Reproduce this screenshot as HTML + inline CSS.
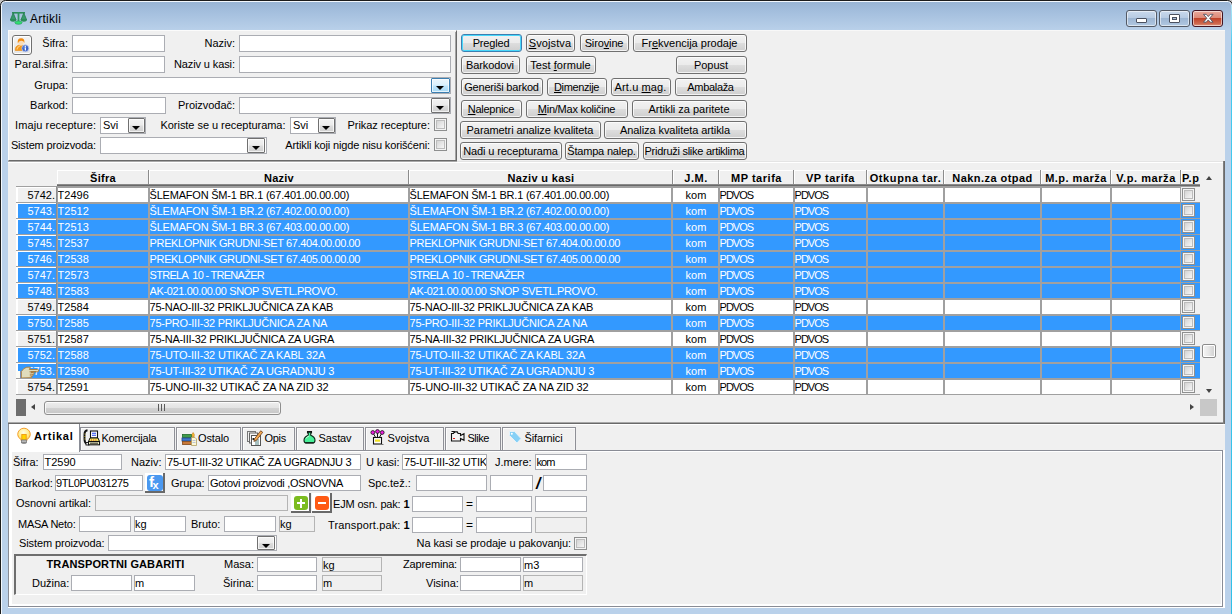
<!DOCTYPE html><html><head><meta charset="utf-8"><title>Artikli</title><style>
*{box-sizing:border-box;margin:0;padding:0}
html,body{width:1232px;height:614px;overflow:hidden;background:#c3c3c3}
body{font-family:"Liberation Sans",sans-serif;font-size:11px;color:#000;position:relative;line-height:13px}
.a{position:absolute}
.t{position:absolute;white-space:pre;height:13px;line-height:13px}
.r{text-align:right}
.c{text-align:center}
.b{font-weight:bold}
.in{position:absolute;background:#fff;border:1px solid #abadb3;white-space:pre;overflow:hidden;line-height:15px;padding-left:1px}
.dis{background:#f0f0f0;border-color:#b4b4b4}
.btn{position:absolute;border:1px solid #707070;border-radius:3px;background:linear-gradient(#f2f2f2 0%,#ebebeb 48%,#dddddd 52%,#cfcfcf 100%);box-shadow:inset 0 0 0 1px rgba(255,255,255,.75);text-align:center;white-space:pre;line-height:16px;height:18px;padding-right:1px}
.btn.def{border-color:#3c7fb1;box-shadow:inset 0 0 0 1px #48d8fb}
.cb{position:absolute;width:13px;height:13px;border:1px solid #8e8f8f;background:#f4f4f4;box-shadow:inset 0 0 0 1px #f4f4f4, inset 0 0 0 2px #bcbcbc;}
.cb i{position:absolute;left:2px;top:2px;width:7px;height:7px;background:linear-gradient(135deg,#d4d4d4,#f6f6f6)}
.dd{position:absolute;width:17px;border:1px solid #707070;border-radius:1px;background:linear-gradient(#f2f2f2 0%,#ebebeb 48%,#dddddd 52%,#cfcfcf 100%);box-shadow:inset 0 0 0 1px rgba(255,255,255,.7)}
.dd:after{content:"";position:absolute;left:50%;margin-left:-4.5px;top:7px;border:4px solid transparent;border-top:4px solid #000;border-bottom:none;width:0;height:0}
.dd.hot{border-color:#3c7fb1;background:linear-gradient(#eaf6fd 0%,#d9f0fc 48%,#bee6fd 52%,#a7d9f5 100%)}
u{text-decoration:underline}
</style></head><body>
<div class="a" style="left:0px;top:0px;width:1233px;height:620px;background:linear-gradient(#98b4d4 0px,#a3bedd 10px,#bad1ea 30px,#bad1ea 100%);border:1px solid #1c1c1c;border-radius:5.5px 5.5px 0 0;box-shadow:inset 0 0 0 1px #f3f8fd;"></div>
<div class="a" style="left:1231px;top:5px;width:1px;height:609px;background:linear-gradient(#b4e6f6 0px,#46caf0 40px,#30c0e8 100%)"></div>
<svg class="a" style="left:10px;top:11px" width="17" height="14" viewBox="0 0 17 14">
<rect x="2" y="1" width="13" height="1.6" fill="#2c8c5a"/>
<rect x="7.6" y="1" width="1.8" height="10" fill="#2f9762"/>
<path d="M0.3 9 L3.2 2 L6.1 9 Z" fill="#379a6c" stroke="#237a4e" stroke-width=".8"/>
<path d="M10.9 9 L13.8 2 L16.7 9 Z" fill="#379a6c" stroke="#237a4e" stroke-width=".8"/>
<path d="M0.2 8.6 h6 a3 2.2 0 0 1 -6 0z" fill="#2a8c58"/>
<path d="M10.8 8.6 h6 a3 2.2 0 0 1 -6 0z" fill="#2a8c58"/>
<ellipse cx="8.5" cy="11.6" rx="3.6" ry="1.7" fill="#2fe070" stroke="#2a9c5c" stroke-width=".7"/>
</svg>
<div class="t " style="left:30px;top:12px;font-size:12px;height:15px;line-height:15px;letter-spacing:.25px">Artikli</div>
<div class="a" style="left:1126px;top:10px;width:31px;height:17px;background:linear-gradient(#c9d9ec 0%,#b7cbe3 45%,#9db6d3 50%,#b0c8e2 100%);border:1px solid #535a66;border-radius:3px;box-shadow:inset 0 0 0 1px rgba(255,255,255,.55)"></div>
<div class="a" style="left:1159px;top:10px;width:31px;height:17px;background:linear-gradient(#c9d9ec 0%,#b7cbe3 45%,#9db6d3 50%,#b0c8e2 100%);border:1px solid #535a66;border-radius:3px;box-shadow:inset 0 0 0 1px rgba(255,255,255,.55)"></div>
<div class="a" style="left:1192px;top:10px;width:31px;height:17px;background:linear-gradient(#e9a99c 0%,#dd8a78 45%,#c0432a 50%,#cf6a50 85%,#e39a85 100%);border:1px solid #431422;border-radius:3px;box-shadow:inset 0 0 0 1px rgba(255,255,255,.55)"></div>
<div class="a" style="left:1136px;top:18px;width:11px;height:5px;background:#fff;border:1px solid #4a5160;border-radius:1px"></div>
<div class="a" style="left:1169px;top:14px;width:11px;height:9px;background:#fff;border:1px solid #4a5160;border-radius:1px"></div>
<div class="a" style="left:1172px;top:17px;width:5px;height:3px;background:#a9bfd9;border:1px solid #4a5160"></div>
<svg class="a" style="left:1201.500px;top:13px" width="12.500" height="10.500" viewBox="0 0 14 12"><path d="M1.5 1.5h3.2l2.3 2.6 2.3-2.6h3.2l-3.9 4.5 3.9 4.5h-3.2l-2.3-2.6-2.3 2.6h-3.2l3.9-4.5z" fill="#fff" stroke="#4a4e5e" stroke-width="1"/></svg>
<div class="a" style="left:8px;top:30px;width:1217px;height:578px;background:#f0f0f0"></div>
<div class="a" style="left:8px;top:30px;width:449px;height:131px;border-right:1px solid #696969;border-bottom:1px solid #696969;border-top:1px solid #fbfbfb;border-left:1px solid #fbfbfb"></div>
<div class="a" style="left:455px;top:32px;width:1px;height:128px;background:#a4a4a4"></div>
<div class="a" style="left:457px;top:30px;width:768px;height:1px;background:#f8f8f8"></div>
<div class="a" style="left:457px;top:161px;width:766px;height:1px;background:#e4e4e4"></div>
<div class="a" style="left:8px;top:161px;width:449px;height:1px;background:#a8a8a8"></div>
<div class="a" style="left:8px;top:162px;width:1215px;height:1px;background:#fff"></div>
<div class="a" style="left:12px;top:35px;width:20px;height:20px;border:1px solid #707070;border-radius:3px;background:linear-gradient(#f4f4f4,#e4e4e4);box-shadow:inset 0 0 0 1px #fff"></div>
<svg class="a" style="left:14px;top:37px" width="16" height="16" viewBox="0 0 16 16">
<path d="M1.300 13.500 q-.5-4.500 4-5.500 h3 q3.500 1 3.500 5.500z" fill="#f5981c" stroke="#e88a10" stroke-width=".6"/>
<path d="M3 12.500 q.5-3 3-3.500" stroke="#fcc878" stroke-width="1.200" fill="none"/>
<ellipse cx="7" cy="5.800" rx="2.600" ry="2.900" fill="#f9dcb8"/>
<path d="M3.800 6.500 q-.8-5.300 3.300-5.300 q4 0 3.200 5 q-.6-2.600 -3.300-2.400 q-2.400 0 -3.200 2.700z" fill="#f28a10"/>
<circle cx="11.300" cy="11.300" r="3.500" fill="#3a62c8" stroke="#c8d4f0" stroke-width=".7"/>
<circle cx="10.500" cy="10.200" r="1.800" fill="#5a86e0" opacity=".7"/>
<rect x="10.750" y="10.400" width="1.200" height="3.100" fill="#fff"/><rect x="10.750" y="8.700" width="1.200" height="1.200" fill="#fff"/>
</svg>
<div class="t r " style="right:1164px;top:37px;">Šifra:</div>
<div class="in " style="left:72px;top:35px;width:93px;height:17px;"></div>
<div class="t r " style="right:997px;top:37px;">Naziv:</div>
<div class="in " style="left:239px;top:35px;width:212px;height:17px;"></div>
<div class="t r " style="right:1163.92px;top:58px;letter-spacing:0.077px;">Paral.šifra:</div>
<div class="in " style="left:72px;top:56px;width:93px;height:17px;"></div>
<div class="t r " style="right:997.105px;top:58px;letter-spacing:-0.105px;">Naziv u kasi:</div>
<div class="in " style="left:239px;top:56px;width:212px;height:17px;"></div>
<div class="t r " style="right:1164px;top:79px;">Grupa:</div>
<div class="in " style="left:72px;top:77px;width:379px;height:17px;"></div>
<div class="dd hot" style="left:431px;top:78px;height:15px;width:19px"></div>
<div class="t r " style="right:1164px;top:99px;">Barkod:</div>
<div class="in " style="left:72px;top:97px;width:94px;height:17px;"></div>
<div class="t r " style="right:997.044px;top:99px;letter-spacing:-0.044px;">Proizvođač:</div>
<div class="in " style="left:239px;top:97px;width:212px;height:17px;"></div>
<div class="dd " style="left:431px;top:98px;height:15px;width:19px"></div>
<div class="t r " style="right:1135.9px;top:119px;letter-spacing:0.095px;">Imaju recepture:</div>
<div class="in " style="left:100px;top:117px;width:46px;height:17px;padding-left:2px">Svi</div>
<div class="dd " style="left:128px;top:118px;height:15px;width:17px"></div>
<div class="t r " style="right:946.538px;top:119px;letter-spacing:-0.038px;">Koriste se u recepturama:</div>
<div class="in " style="left:290px;top:117px;width:46px;height:17px;padding-left:2px">Svi</div>
<div class="dd " style="left:318px;top:118px;height:15px;width:17px"></div>
<div class="t r " style="right:802.039px;top:119px;letter-spacing:-0.039px;">Prikaz recepture:</div>
<div class="cb" style="left:434px;top:118px"><i></i></div>
<div class="t r " style="right:1136.14px;top:139px;letter-spacing:-0.143px;">Sistem proizvoda:</div>
<div class="in " style="left:100px;top:137px;width:167px;height:17px;"></div>
<div class="dd " style="left:247px;top:138px;height:15px;width:18px"></div>
<div class="t r " style="right:802.137px;top:139px;letter-spacing:-0.137px;">Artikli koji nigde nisu korišćeni:</div>
<div class="cb" style="left:434px;top:138px"><i></i></div>
<div class="btn def" style="left:461px;top:34px;width:61px;letter-spacing:-0.175px;">Pregled</div>
<div class="btn " style="left:526px;top:34px;width:49px;letter-spacing:0.090px;"><u>S</u>vojstva</div>
<div class="btn " style="left:580px;top:34px;width:49px;letter-spacing:-0.131px;">Siro<u>v</u>ine</div>
<div class="btn " style="left:633px;top:34px;width:114px;letter-spacing:-0.005px;">Fr<u>e</u>kvencija prodaje</div>
<div class="btn " style="left:461px;top:56px;width:59px;letter-spacing:-0.125px;">Barkodovi</div>
<div class="btn " style="left:526px;top:56px;width:70px;letter-spacing:0.057px;">Test <u>f</u>ormule</div>
<div class="btn " style="left:676px;top:56px;width:71px;letter-spacing:-0.042px;">Popust</div>
<div class="btn " style="left:461px;top:78px;width:82px;letter-spacing:-0.210px;">Generiši barkod</div>
<div class="btn " style="left:547px;top:78px;width:60px;letter-spacing:-0.366px;"><u>D</u>imenzije</div>
<div class="btn " style="left:611px;top:78px;width:60px;letter-spacing:0.105px;">Art.u <u>m</u>ag.</div>
<div class="btn " style="left:675px;top:78px;width:72px;letter-spacing:-0.328px;">Ambalaža</div>
<div class="btn " style="left:461px;top:100px;width:61px;letter-spacing:-0.291px;"><u>N</u>alepnice</div>
<div class="btn " style="left:526px;top:100px;width:102px;letter-spacing:-0.238px;"><u>M</u>in/Max količine</div>
<div class="btn " style="left:632px;top:100px;width:115px;letter-spacing:-0.016px;">Artikli za paritete</div>
<div class="btn " style="left:460px;top:121px;width:141px;letter-spacing:-0.082px;">Parametri analize kvaliteta</div>
<div class="btn " style="left:604px;top:121px;width:143px;letter-spacing:-0.076px;">Analiza kvaliteta artikla</div>
<div class="btn " style="left:460px;top:142px;width:102px;letter-spacing:-0.112px;">Nađi u recepturama</div>
<div class="btn " style="left:565px;top:142px;width:74px;letter-spacing:-0.195px;">Štampa nalep.</div>
<div class="btn " style="left:643px;top:142px;width:104px;letter-spacing:-0.269px;">Pridruži slike artiklima</div>
<div class="a" style="left:57px;top:170px;width:91px;height:14px;background:#f0f0f0;border-left:1px solid #fff;border-top:1px solid #fff;overflow:hidden"><div class="t b c" style="left:0;right:0;top:0.5px;letter-spacing:0.306px;">Šifra</div></div>
<div class="a" style="left:148px;top:170px;width:1px;height:14px;background:#8c8c8c"></div>
<div class="a" style="left:149px;top:170px;width:259px;height:14px;background:#f0f0f0;border-left:1px solid #fff;border-top:1px solid #fff;overflow:hidden"><div class="t b c" style="left:0;right:0;top:0.5px;letter-spacing:0.250px;">Naziv</div></div>
<div class="a" style="left:408px;top:170px;width:1px;height:14px;background:#8c8c8c"></div>
<div class="a" style="left:409px;top:170px;width:263px;height:14px;background:#f0f0f0;border-left:1px solid #fff;border-top:1px solid #fff;overflow:hidden"><div class="t b c" style="left:0;right:0;top:0.5px;letter-spacing:0.335px;">Naziv u kasi</div></div>
<div class="a" style="left:672px;top:170px;width:1px;height:14px;background:#8c8c8c"></div>
<div class="a" style="left:673px;top:170px;width:45px;height:14px;background:#f0f0f0;border-left:1px solid #fff;border-top:1px solid #fff;overflow:hidden"><div class="t b c" style="left:0;right:0;top:0.5px;letter-spacing:0.523px;">J.M.</div></div>
<div class="a" style="left:718px;top:170px;width:1px;height:14px;background:#8c8c8c"></div>
<div class="a" style="left:719px;top:170px;width:74px;height:14px;background:#f0f0f0;border-left:1px solid #fff;border-top:1px solid #fff;overflow:hidden"><div class="t b c" style="left:0;right:0;top:0.5px;letter-spacing:0.526px;">MP tarifa</div></div>
<div class="a" style="left:793px;top:170px;width:1px;height:14px;background:#8c8c8c"></div>
<div class="a" style="left:794px;top:170px;width:72px;height:14px;background:#f0f0f0;border-left:1px solid #fff;border-top:1px solid #fff;overflow:hidden"><div class="t b c" style="left:0;right:0;top:0.5px;letter-spacing:0.507px;">VP tarifa</div></div>
<div class="a" style="left:866px;top:170px;width:1px;height:14px;background:#8c8c8c"></div>
<div class="a" style="left:867px;top:170px;width:76px;height:14px;background:#f0f0f0;border-left:1px solid #fff;border-top:1px solid #fff;overflow:hidden"><div class="t b c" style="left:0;right:0;top:0.5px;letter-spacing:0.630px;">Otkupna tar.</div></div>
<div class="a" style="left:943px;top:170px;width:1px;height:14px;background:#8c8c8c"></div>
<div class="a" style="left:944px;top:170px;width:96px;height:14px;background:#f0f0f0;border-left:1px solid #fff;border-top:1px solid #fff;overflow:hidden"><div class="t b c" style="left:0;right:0;top:0.5px;letter-spacing:0.456px;">Nakn.za otpad</div></div>
<div class="a" style="left:1040px;top:170px;width:1px;height:14px;background:#8c8c8c"></div>
<div class="a" style="left:1041px;top:170px;width:69px;height:14px;background:#f0f0f0;border-left:1px solid #fff;border-top:1px solid #fff;overflow:hidden"><div class="t b c" style="left:0;right:0;top:0.5px;letter-spacing:0.489px;">M.p. marža</div></div>
<div class="a" style="left:1110px;top:170px;width:1px;height:14px;background:#8c8c8c"></div>
<div class="a" style="left:1111px;top:170px;width:69px;height:14px;background:#f0f0f0;border-left:1px solid #fff;border-top:1px solid #fff;overflow:hidden"><div class="t b c" style="left:0;right:0;top:0.5px;letter-spacing:0.573px;">V.p. marža</div></div>
<div class="a" style="left:1180px;top:170px;width:1px;height:14px;background:#8c8c8c"></div>
<div class="a" style="left:1181px;top:170px;width:20px;height:14px;background:#f0f0f0;border-left:1px solid #fff;border-top:1px solid #fff;overflow:hidden"><div class="t b c" style="left:0;right:0;top:0.5px;text-align:left;left:0px;letter-spacing:0.599px;">P.p</div></div>
<div class="a" style="left:57px;top:184px;width:1143px;height:1px;background:#8a8a8a"></div>
<div class="a" style="left:57px;top:185px;width:1143px;height:1px;background:#696969"></div>
<div class="a" style="left:16px;top:186px;width:41px;height:16px;background:#f0f0f0;color:#000;border-top:1px solid #a0a0a0;border-right:1px solid #8c8c8c;overflow:hidden"><div class="a" style="left:0;top:0;right:0;bottom:0;border-left:2px solid #fff;border-top:1px solid #fff"></div><div class="t r" style="right:1px;top:2px">5742.</div></div>
<div class="a" style="left:57px;top:186px;width:1123px;height:16px;background:#fff;color:#000;border-top:2px solid #a0a0a0"><div class="t" style="left:0.6px;width:90px;overflow:hidden;top:1px;">T2496</div><div class="t" style="left:92.6px;width:258px;overflow:hidden;top:1px;letter-spacing:-0.216px;">ŠLEMAFON ŠM-1 BR.1 (67.401.00.00.00)</div><div class="t" style="left:352.6px;width:262px;overflow:hidden;top:1px;letter-spacing:-0.216px;">ŠLEMAFON ŠM-1 BR.1 (67.401.00.00.00)</div><div class="t c" style="left:617px;width:44px;top:1px">kom</div><div class="t" style="left:662.6px;width:73px;overflow:hidden;top:1px;letter-spacing:-1.003px;">PDVOS</div><div class="t" style="left:737.6px;width:71px;overflow:hidden;top:1px;letter-spacing:-1.003px;">PDVOS</div></div>
<div class="a" style="left:1180px;top:186px;width:20px;height:16px;background:#f0f0f0;border-top:1px solid #a0a0a0"></div>
<div class="cb" style="left:1182px;top:188px"><i></i></div>
<div class="a" style="left:16px;top:202px;width:41px;height:16px;background:#3399ff;color:#fff;border-top:1px solid #a0a0a0;border-right:1px solid #8c8c8c;overflow:hidden"><div class="a" style="left:0;top:0;right:0;bottom:0;border-left:2px solid #fff;border-top:1px solid #fff"></div><div class="t r" style="right:1px;top:2px">5743.</div></div>
<div class="a" style="left:57px;top:202px;width:1123px;height:16px;background:#3399ff;color:#fff;border-top:2px solid #a0a0a0"><div class="t" style="left:0.6px;width:90px;overflow:hidden;top:1px;">T2512</div><div class="t" style="left:92.6px;width:258px;overflow:hidden;top:1px;letter-spacing:-0.216px;">ŠLEMAFON ŠM-1 BR.2 (67.402.00.00.00)</div><div class="t" style="left:352.6px;width:262px;overflow:hidden;top:1px;letter-spacing:-0.216px;">ŠLEMAFON ŠM-1 BR.2 (67.402.00.00.00)</div><div class="t c" style="left:617px;width:44px;top:1px">kom</div><div class="t" style="left:662.6px;width:73px;overflow:hidden;top:1px;letter-spacing:-1.003px;">PDVOS</div><div class="t" style="left:737.6px;width:71px;overflow:hidden;top:1px;letter-spacing:-1.003px;">PDVOS</div></div>
<div class="a" style="left:1180px;top:202px;width:20px;height:16px;background:#3399ff;border-top:1px solid #a0a0a0"></div>
<div class="cb" style="left:1182px;top:204px"><i></i></div>
<div class="a" style="left:16px;top:218px;width:41px;height:16px;background:#3399ff;color:#fff;border-top:1px solid #a0a0a0;border-right:1px solid #8c8c8c;overflow:hidden"><div class="a" style="left:0;top:0;right:0;bottom:0;border-left:2px solid #fff;border-top:1px solid #fff"></div><div class="t r" style="right:1px;top:2px">5744.</div></div>
<div class="a" style="left:57px;top:218px;width:1123px;height:16px;background:#3399ff;color:#fff;border-top:2px solid #a0a0a0"><div class="t" style="left:0.6px;width:90px;overflow:hidden;top:1px;">T2513</div><div class="t" style="left:92.6px;width:258px;overflow:hidden;top:1px;letter-spacing:-0.216px;">ŠLEMAFON ŠM-1 BR.3 (67.403.00.00.00)</div><div class="t" style="left:352.6px;width:262px;overflow:hidden;top:1px;letter-spacing:-0.216px;">ŠLEMAFON ŠM-1 BR.3 (67.403.00.00.00)</div><div class="t c" style="left:617px;width:44px;top:1px">kom</div><div class="t" style="left:662.6px;width:73px;overflow:hidden;top:1px;letter-spacing:-1.003px;">PDVOS</div><div class="t" style="left:737.6px;width:71px;overflow:hidden;top:1px;letter-spacing:-1.003px;">PDVOS</div></div>
<div class="a" style="left:1180px;top:218px;width:20px;height:16px;background:#3399ff;border-top:1px solid #a0a0a0"></div>
<div class="cb" style="left:1182px;top:220px"><i></i></div>
<div class="a" style="left:16px;top:234px;width:41px;height:16px;background:#3399ff;color:#fff;border-top:1px solid #a0a0a0;border-right:1px solid #8c8c8c;overflow:hidden"><div class="a" style="left:0;top:0;right:0;bottom:0;border-left:2px solid #fff;border-top:1px solid #fff"></div><div class="t r" style="right:1px;top:2px">5745.</div></div>
<div class="a" style="left:57px;top:234px;width:1123px;height:16px;background:#3399ff;color:#fff;border-top:2px solid #a0a0a0"><div class="t" style="left:0.6px;width:90px;overflow:hidden;top:1px;">T2537</div><div class="t" style="left:92.6px;width:258px;overflow:hidden;top:1px;letter-spacing:-0.370px;">PREKLOPNIK GRUDNI-SET 67.404.00.00.00</div><div class="t" style="left:352.6px;width:262px;overflow:hidden;top:1px;letter-spacing:-0.370px;">PREKLOPNIK GRUDNI-SET 67.404.00.00.00</div><div class="t c" style="left:617px;width:44px;top:1px">kom</div><div class="t" style="left:662.6px;width:73px;overflow:hidden;top:1px;letter-spacing:-1.003px;">PDVOS</div><div class="t" style="left:737.6px;width:71px;overflow:hidden;top:1px;letter-spacing:-1.003px;">PDVOS</div></div>
<div class="a" style="left:1180px;top:234px;width:20px;height:16px;background:#3399ff;border-top:1px solid #a0a0a0"></div>
<div class="cb" style="left:1182px;top:236px"><i></i></div>
<div class="a" style="left:16px;top:250px;width:41px;height:16px;background:#3399ff;color:#fff;border-top:1px solid #a0a0a0;border-right:1px solid #8c8c8c;overflow:hidden"><div class="a" style="left:0;top:0;right:0;bottom:0;border-left:2px solid #fff;border-top:1px solid #fff"></div><div class="t r" style="right:1px;top:2px">5746.</div></div>
<div class="a" style="left:57px;top:250px;width:1123px;height:16px;background:#3399ff;color:#fff;border-top:2px solid #a0a0a0"><div class="t" style="left:0.6px;width:90px;overflow:hidden;top:1px;">T2538</div><div class="t" style="left:92.6px;width:258px;overflow:hidden;top:1px;letter-spacing:-0.370px;">PREKLOPNIK GRUDNI-SET 67.405.00.00.00</div><div class="t" style="left:352.6px;width:262px;overflow:hidden;top:1px;letter-spacing:-0.370px;">PREKLOPNIK GRUDNI-SET 67.405.00.00.00</div><div class="t c" style="left:617px;width:44px;top:1px">kom</div><div class="t" style="left:662.6px;width:73px;overflow:hidden;top:1px;letter-spacing:-1.003px;">PDVOS</div><div class="t" style="left:737.6px;width:71px;overflow:hidden;top:1px;letter-spacing:-1.003px;">PDVOS</div></div>
<div class="a" style="left:1180px;top:250px;width:20px;height:16px;background:#3399ff;border-top:1px solid #a0a0a0"></div>
<div class="cb" style="left:1182px;top:252px"><i></i></div>
<div class="a" style="left:16px;top:266px;width:41px;height:16px;background:#3399ff;color:#fff;border-top:1px solid #a0a0a0;border-right:1px solid #8c8c8c;overflow:hidden"><div class="a" style="left:0;top:0;right:0;bottom:0;border-left:2px solid #fff;border-top:1px solid #fff"></div><div class="t r" style="right:1px;top:2px">5747.</div></div>
<div class="a" style="left:57px;top:266px;width:1123px;height:16px;background:#3399ff;color:#fff;border-top:2px solid #a0a0a0"><div class="t" style="left:0.6px;width:90px;overflow:hidden;top:1px;">T2573</div><div class="t" style="left:92.6px;width:258px;overflow:hidden;top:1px;letter-spacing:-0.709px;">STRELA  10 - TRENAŽER</div><div class="t" style="left:352.6px;width:262px;overflow:hidden;top:1px;letter-spacing:-0.709px;">STRELA  10 - TRENAŽER</div><div class="t c" style="left:617px;width:44px;top:1px">kom</div><div class="t" style="left:662.6px;width:73px;overflow:hidden;top:1px;letter-spacing:-1.003px;">PDVOS</div><div class="t" style="left:737.6px;width:71px;overflow:hidden;top:1px;letter-spacing:-1.003px;">PDVOS</div></div>
<div class="a" style="left:1180px;top:266px;width:20px;height:16px;background:#3399ff;border-top:1px solid #a0a0a0"></div>
<div class="cb" style="left:1182px;top:268px"><i></i></div>
<div class="a" style="left:16px;top:282px;width:41px;height:16px;background:#3399ff;color:#fff;border-top:1px solid #a0a0a0;border-right:1px solid #8c8c8c;overflow:hidden"><div class="a" style="left:0;top:0;right:0;bottom:0;border-left:2px solid #fff;border-top:1px solid #fff"></div><div class="t r" style="right:1px;top:2px">5748.</div></div>
<div class="a" style="left:57px;top:282px;width:1123px;height:16px;background:#3399ff;color:#fff;border-top:2px solid #a0a0a0"><div class="t" style="left:0.6px;width:90px;overflow:hidden;top:1px;">T2583</div><div class="t" style="left:92.6px;width:258px;overflow:hidden;top:1px;letter-spacing:-0.374px;">AK-021.00.00.00 SNOP SVETL.PROVO.</div><div class="t" style="left:352.6px;width:262px;overflow:hidden;top:1px;letter-spacing:-0.374px;">AK-021.00.00.00 SNOP SVETL.PROVO.</div><div class="t c" style="left:617px;width:44px;top:1px">kom</div><div class="t" style="left:662.6px;width:73px;overflow:hidden;top:1px;letter-spacing:-1.003px;">PDVOS</div><div class="t" style="left:737.6px;width:71px;overflow:hidden;top:1px;letter-spacing:-1.003px;">PDVOS</div></div>
<div class="a" style="left:1180px;top:282px;width:20px;height:16px;background:#3399ff;border-top:1px solid #a0a0a0"></div>
<div class="cb" style="left:1182px;top:284px"><i></i></div>
<div class="a" style="left:16px;top:298px;width:41px;height:16px;background:#f0f0f0;color:#000;border-top:1px solid #a0a0a0;border-right:1px solid #8c8c8c;overflow:hidden"><div class="a" style="left:0;top:0;right:0;bottom:0;border-left:2px solid #fff;border-top:1px solid #fff"></div><div class="t r" style="right:1px;top:2px">5749.</div></div>
<div class="a" style="left:57px;top:298px;width:1123px;height:16px;background:#fff;color:#000;border-top:2px solid #a0a0a0"><div class="t" style="left:0.6px;width:90px;overflow:hidden;top:1px;">T2584</div><div class="t" style="left:92.6px;width:258px;overflow:hidden;top:1px;letter-spacing:-0.256px;">75-NAO-III-32 PRIKLJUČNICA ZA KAB</div><div class="t" style="left:352.6px;width:262px;overflow:hidden;top:1px;letter-spacing:-0.256px;">75-NAO-III-32 PRIKLJUČNICA ZA KAB</div><div class="t c" style="left:617px;width:44px;top:1px">kom</div><div class="t" style="left:662.6px;width:73px;overflow:hidden;top:1px;letter-spacing:-1.003px;">PDVOS</div><div class="t" style="left:737.6px;width:71px;overflow:hidden;top:1px;letter-spacing:-1.003px;">PDVOS</div></div>
<div class="a" style="left:1180px;top:298px;width:20px;height:16px;background:#f0f0f0;border-top:1px solid #a0a0a0"></div>
<div class="cb" style="left:1182px;top:300px"><i></i></div>
<div class="a" style="left:16px;top:314px;width:41px;height:16px;background:#3399ff;color:#fff;border-top:1px solid #a0a0a0;border-right:1px solid #8c8c8c;overflow:hidden"><div class="a" style="left:0;top:0;right:0;bottom:0;border-left:2px solid #fff;border-top:1px solid #fff"></div><div class="t r" style="right:1px;top:2px">5750.</div></div>
<div class="a" style="left:57px;top:314px;width:1123px;height:16px;background:#3399ff;color:#fff;border-top:2px solid #a0a0a0"><div class="t" style="left:0.6px;width:90px;overflow:hidden;top:1px;">T2585</div><div class="t" style="left:92.6px;width:258px;overflow:hidden;top:1px;letter-spacing:-0.241px;">75-PRO-III-32 PRIKLJUČNICA ZA NA</div><div class="t" style="left:352.6px;width:262px;overflow:hidden;top:1px;letter-spacing:-0.241px;">75-PRO-III-32 PRIKLJUČNICA ZA NA</div><div class="t c" style="left:617px;width:44px;top:1px">kom</div><div class="t" style="left:662.6px;width:73px;overflow:hidden;top:1px;letter-spacing:-1.003px;">PDVOS</div><div class="t" style="left:737.6px;width:71px;overflow:hidden;top:1px;letter-spacing:-1.003px;">PDVOS</div></div>
<div class="a" style="left:1180px;top:314px;width:20px;height:16px;background:#3399ff;border-top:1px solid #a0a0a0"></div>
<div class="cb" style="left:1182px;top:316px"><i></i></div>
<div class="a" style="left:16px;top:330px;width:41px;height:16px;background:#f0f0f0;color:#000;border-top:1px solid #a0a0a0;border-right:1px solid #8c8c8c;overflow:hidden"><div class="a" style="left:0;top:0;right:0;bottom:0;border-left:2px solid #fff;border-top:1px solid #fff"></div><div class="t r" style="right:1px;top:2px">5751.</div></div>
<div class="a" style="left:57px;top:330px;width:1123px;height:16px;background:#fff;color:#000;border-top:2px solid #a0a0a0"><div class="t" style="left:0.6px;width:90px;overflow:hidden;top:1px;">T2587</div><div class="t" style="left:92.6px;width:258px;overflow:hidden;top:1px;letter-spacing:-0.263px;">75-NA-III-32 PRIKLJUČNICA ZA UGRA</div><div class="t" style="left:352.6px;width:262px;overflow:hidden;top:1px;letter-spacing:-0.263px;">75-NA-III-32 PRIKLJUČNICA ZA UGRA</div><div class="t c" style="left:617px;width:44px;top:1px">kom</div><div class="t" style="left:662.6px;width:73px;overflow:hidden;top:1px;letter-spacing:-1.003px;">PDVOS</div><div class="t" style="left:737.6px;width:71px;overflow:hidden;top:1px;letter-spacing:-1.003px;">PDVOS</div></div>
<div class="a" style="left:1180px;top:330px;width:20px;height:16px;background:#f0f0f0;border-top:1px solid #a0a0a0"></div>
<div class="cb" style="left:1182px;top:332px"><i></i></div>
<div class="a" style="left:16px;top:346px;width:41px;height:16px;background:#3399ff;color:#fff;border-top:1px solid #a0a0a0;border-right:1px solid #8c8c8c;overflow:hidden"><div class="a" style="left:0;top:0;right:0;bottom:0;border-left:2px solid #fff;border-top:1px solid #fff"></div><div class="t r" style="right:1px;top:2px">5752.</div></div>
<div class="a" style="left:57px;top:346px;width:1123px;height:16px;background:#3399ff;color:#fff;border-top:2px solid #a0a0a0"><div class="t" style="left:0.6px;width:90px;overflow:hidden;top:1px;">T2588</div><div class="t" style="left:92.6px;width:258px;overflow:hidden;top:1px;letter-spacing:-0.170px;">75-UTO-III-32 UTIKAČ ZA KABL 32A</div><div class="t" style="left:352.6px;width:262px;overflow:hidden;top:1px;letter-spacing:-0.170px;">75-UTO-III-32 UTIKAČ ZA KABL 32A</div><div class="t c" style="left:617px;width:44px;top:1px">kom</div><div class="t" style="left:662.6px;width:73px;overflow:hidden;top:1px;letter-spacing:-1.003px;">PDVOS</div><div class="t" style="left:737.6px;width:71px;overflow:hidden;top:1px;letter-spacing:-1.003px;">PDVOS</div></div>
<div class="a" style="left:1180px;top:346px;width:20px;height:16px;background:#3399ff;border-top:1px solid #a0a0a0"></div>
<div class="cb" style="left:1182px;top:348px"><i></i></div>
<div class="a" style="left:16px;top:362px;width:41px;height:16px;background:#3399ff;color:#fff;border-top:1px solid #a0a0a0;border-right:1px solid #8c8c8c;overflow:hidden"><div class="a" style="left:0;top:0;right:0;bottom:0;border-left:2px solid #fff;border-top:1px solid #fff"></div><div class="t r" style="right:1px;top:2px">5753.</div></div>
<div class="a" style="left:57px;top:362px;width:1123px;height:16px;background:#3399ff;color:#fff;border-top:2px solid #a0a0a0"><div class="t" style="left:0.6px;width:90px;overflow:hidden;top:1px;">T2590</div><div class="t" style="left:92.6px;width:258px;overflow:hidden;top:1px;letter-spacing:-0.225px;">75-UT-III-32 UTIKAČ ZA UGRADNJU 3</div><div class="t" style="left:352.6px;width:262px;overflow:hidden;top:1px;letter-spacing:-0.225px;">75-UT-III-32 UTIKAČ ZA UGRADNJU 3</div><div class="t c" style="left:617px;width:44px;top:1px">kom</div><div class="t" style="left:662.6px;width:73px;overflow:hidden;top:1px;letter-spacing:-1.003px;">PDVOS</div><div class="t" style="left:737.6px;width:71px;overflow:hidden;top:1px;letter-spacing:-1.003px;">PDVOS</div></div>
<div class="a" style="left:1180px;top:362px;width:20px;height:16px;background:#3399ff;border-top:1px solid #a0a0a0"></div>
<div class="cb" style="left:1182px;top:364px"><i></i></div>
<div class="a" style="left:16px;top:378px;width:41px;height:16px;background:#f0f0f0;color:#000;border-top:1px solid #a0a0a0;border-right:1px solid #8c8c8c;overflow:hidden"><div class="a" style="left:0;top:0;right:0;bottom:0;border-left:2px solid #fff;border-top:1px solid #fff"></div><div class="t r" style="right:1px;top:2px">5754.</div></div>
<div class="a" style="left:57px;top:378px;width:1123px;height:16px;background:#fff;color:#000;border-top:2px solid #a0a0a0"><div class="t" style="left:0.6px;width:90px;overflow:hidden;top:1px;">T2591</div><div class="t" style="left:92.6px;width:258px;overflow:hidden;top:1px;letter-spacing:-0.115px;">75-UNO-III-32 UTIKAČ ZA NA ZID 32</div><div class="t" style="left:352.6px;width:262px;overflow:hidden;top:1px;letter-spacing:-0.115px;">75-UNO-III-32 UTIKAČ ZA NA ZID 32</div><div class="t c" style="left:617px;width:44px;top:1px">kom</div><div class="t" style="left:662.6px;width:73px;overflow:hidden;top:1px;letter-spacing:-1.003px;">PDVOS</div><div class="t" style="left:737.6px;width:71px;overflow:hidden;top:1px;letter-spacing:-1.003px;">PDVOS</div></div>
<div class="a" style="left:1180px;top:378px;width:20px;height:16px;background:#f0f0f0;border-top:1px solid #a0a0a0"></div>
<div class="cb" style="left:1182px;top:380px"><i></i></div>
<div class="a" style="left:16px;top:394px;width:1184px;height:1px;background:#a0a0a0"></div>
<div class="a" style="left:57px;top:186px;width:1px;height:209px;background:#a0a0a0"></div>
<div class="a" style="left:148px;top:186px;width:2px;height:209px;background:#a0a0a0"></div>
<div class="a" style="left:408px;top:186px;width:2px;height:209px;background:#a0a0a0"></div>
<div class="a" style="left:671px;top:186px;width:2px;height:209px;background:#a0a0a0"></div>
<div class="a" style="left:718px;top:186px;width:2px;height:209px;background:#a0a0a0"></div>
<div class="a" style="left:793px;top:186px;width:2px;height:209px;background:#a0a0a0"></div>
<div class="a" style="left:866px;top:186px;width:2px;height:209px;background:#a0a0a0"></div>
<div class="a" style="left:943px;top:186px;width:2px;height:209px;background:#a0a0a0"></div>
<div class="a" style="left:1040px;top:186px;width:2px;height:209px;background:#a0a0a0"></div>
<div class="a" style="left:1110px;top:186px;width:2px;height:209px;background:#a0a0a0"></div>
<div class="a" style="left:1180px;top:186px;width:1px;height:209px;background:#a0a0a0"></div>
<div class="a" style="left:1200px;top:170px;width:17px;height:229px;background:#f0f0f0"></div>
<div class="a" style="left:1206px;top:176px;border:3.5px solid transparent;border-bottom:4px solid #444;border-top:none;width:0;height:0"></div>
<div class="a" style="left:1206px;top:389px;border:3.5px solid transparent;border-top:4px solid #444;border-bottom:none;width:0;height:0"></div>
<div class="a" style="left:1202px;top:343.5px;width:14px;height:14px;border:1px solid #8c8c8c;border-radius:2px;background:linear-gradient(90deg,#f5f5f5,#e6e6e6 50%,#cfcfcf);box-shadow:inset 0 0 0 1px #fff"></div>
<div class="a" style="left:16px;top:399px;width:10px;height:17px;background:#6d6d6d"></div>
<div class="a" style="left:1200px;top:399px;width:17px;height:17px;background:#c8c8c8"></div>
<div class="a" style="left:31px;top:404px;border:3.5px solid transparent;border-right:4px solid #444;border-left:none;width:0;height:0"></div>
<div class="a" style="left:1190px;top:404px;border:3.5px solid transparent;border-left:4px solid #444;border-right:none;width:0;height:0"></div>
<div class="a" style="left:44px;top:400.5px;width:237px;height:14px;border:1px solid #8e8e8e;border-radius:3px;background:linear-gradient(#eeeeee 0%,#e3e3e3 48%,#d2d2d2 52%,#c6c6c6 100%);box-shadow:inset 0 0 0 1px rgba(255,255,255,.8)"></div>
<div class="a" style="left:158px;top:404px;width:1px;height:7px;background:#5a5a5a"></div>
<div class="a" style="left:161px;top:404px;width:1px;height:7px;background:#5a5a5a"></div>
<div class="a" style="left:164px;top:404px;width:1px;height:7px;background:#5a5a5a"></div>
<svg class="a" style="left:16px;top:366px" width="24" height="12" viewBox="0 0 24 12">
<rect x="0" y="5" width="4.500" height="7" fill="#fbfbf6"/>
<path d="M4.800 5v7" stroke="#5a78c8" stroke-width=".9"/>
<path d="M5.300 12 v-6.500 q2.500-3.800 5.500-4.300 h3.500 l-1 2.300 h8.300 q1.200.2 1 1.300 q-.2 1 -1.200 1 h-6.200 v.8 h2 q.9.200 .8 1 q-.1.800 -.9.800 h-.7 q.6.300 .5 1 q-.1.700 -.8.700 h-.6 q.4.300 .3.900 q-.1.600 -.8.700z" fill="#e0dcbc" stroke="#b07a30" stroke-width=".9"/>
<path d="M13.500 5.800h6.500M13.800 8.200h2.500M13.800 9.900h1.900" stroke="#9a6424" stroke-width=".8" fill="none"/>
</svg>
<div class="a" style="left:8px;top:422px;width:1217px;height:1px;background:#a8a8a8"></div>
<div class="a" style="left:8px;top:423px;width:1217px;height:1px;background:#696969"></div>
<div class="a" style="left:1223px;top:161px;width:2px;height:263px;background:linear-gradient(90deg,#8a8a8a,#606060)"></div>
<div class="a" style="left:8px;top:424px;width:1217px;height:1px;background:#fff"></div>
<div class="a" style="left:8px;top:450px;width:1217px;height:158px;background:#fff"></div>
<div class="a" style="left:8px;top:450px;width:1215px;height:157px;border:1px solid #898c95;background:#fff"></div>
<div class="a" style="left:1223px;top:450px;width:2px;height:158px;background:#fff"></div>
<div class="a" style="left:12px;top:452px;width:1209px;height:152px;background:#f0f0f0"></div>
<div class="a" style="left:80px;top:427px;width:95px;height:24px;border:1px solid #8e8f96;background:linear-gradient(#f2f2f2 0%%,#eaeaea 48%%,#dcdcdc 52%%,#cecece 100%%);box-shadow:inset 1px 1px 0 #fcfcfc, inset -1px 0 0 #f4f4f4"><div class="t" style="left:20.5px;top:4px;letter-spacing:-0.224px;">Komercijala</div></div>
<div class="a" style="left:176px;top:427px;width:65px;height:24px;border:1px solid #8e8f96;background:linear-gradient(#f2f2f2 0%%,#eaeaea 48%%,#dcdcdc 52%%,#cecece 100%%);box-shadow:inset 1px 1px 0 #fcfcfc, inset -1px 0 0 #f4f4f4"><div class="t" style="left:21px;top:4px;letter-spacing:-0.133px;">Ostalo</div></div>
<div class="a" style="left:242px;top:427px;width:53px;height:24px;border:1px solid #8e8f96;background:linear-gradient(#f2f2f2 0%%,#eaeaea 48%%,#dcdcdc 52%%,#cecece 100%%);box-shadow:inset 1px 1px 0 #fcfcfc, inset -1px 0 0 #f4f4f4"><div class="t" style="left:21.5px;top:4px;letter-spacing:-0.281px;">Opis</div></div>
<div class="a" style="left:296px;top:427px;width:68px;height:24px;border:1px solid #8e8f96;background:linear-gradient(#f2f2f2 0%%,#eaeaea 48%%,#dcdcdc 52%%,#cecece 100%%);box-shadow:inset 1px 1px 0 #fcfcfc, inset -1px 0 0 #f4f4f4"><div class="t" style="left:21.5px;top:4px;letter-spacing:-0.107px;">Sastav</div></div>
<div class="a" style="left:365px;top:427px;width:79px;height:24px;border:1px solid #8e8f96;background:linear-gradient(#f2f2f2 0%%,#eaeaea 48%%,#dcdcdc 52%%,#cecece 100%%);box-shadow:inset 1px 1px 0 #fcfcfc, inset -1px 0 0 #f4f4f4"><div class="t" style="left:21.5px;top:4px;letter-spacing:0.053px;">Svojstva</div></div>
<div class="a" style="left:445px;top:427px;width:56px;height:24px;border:1px solid #8e8f96;background:linear-gradient(#f2f2f2 0%%,#eaeaea 48%%,#dcdcdc 52%%,#cecece 100%%);box-shadow:inset 1px 1px 0 #fcfcfc, inset -1px 0 0 #f4f4f4"><div class="t" style="left:21.5px;top:4px;letter-spacing:-0.469px;">Slike</div></div>
<div class="a" style="left:502px;top:427px;width:74px;height:24px;border:1px solid #8e8f96;background:linear-gradient(#f2f2f2 0%%,#eaeaea 48%%,#dcdcdc 52%%,#cecece 100%%);box-shadow:inset 1px 1px 0 #fcfcfc, inset -1px 0 0 #f4f4f4"><div class="t" style="left:21.5px;top:4px;letter-spacing:-0.125px;">Šifarnici</div></div>
<div class="a" style="left:8px;top:424px;width:72px;height:28px;background:#fff;border-right:1px solid #898c95;border-left:1px solid #898c95"><div class="t b" style="left:25px;top:6px;letter-spacing:0.750px;">Artikal</div></div>
<svg class="a" style="left:16px;top:427px" width="16" height="17" viewBox="0 0 16 17">
<defs><radialGradient id="gb" cx=".45" cy=".35" r=".7"><stop offset="0" stop-color="#fffde8"/><stop offset=".6" stop-color="#ffec8a"/><stop offset="1" stop-color="#ffc84a"/></radialGradient></defs>
<path d="M8 1.2 a6.3 6.3 0 0 1 6.300 6.300 q0 3 -3.300 5 v1 h-6 v-1 q-3.300-2 -3.300-5 a6.300 6.300 0 0 1 6.300-6.300z" fill="url(#gb)" stroke="#f5a030" stroke-width="1"/>
<rect x="5.800" y="7.500" width="4.400" height="5.500" fill="#ffd400" stroke="#f09a10" stroke-width=".9"/>
<rect x="5.500" y="13" width="5" height="2.800" fill="#b8b8b8" stroke="#7a7a7a" stroke-width=".8"/>
<rect x="6.200" y="15.600" width="3.600" height="1" fill="#6a6a6a"/>
</svg>
<svg class="a" style="left:83px;top:429px" width="18" height="17" viewBox="0 0 18 17">
<path d="M4.500 1.200 q-3 .3 -3 4 v5 q0 3.500 2.500 4.800" fill="none" stroke="#111" stroke-width="1.900"/>
<path d="M2 4.500v1M2 7v1M2 9.500v1" stroke="#e8d040" stroke-width=".9"/>
<rect x="3" y="13.500" width="3" height="2.500" fill="#fff" stroke="#111" stroke-width=".9"/>
<rect x="7.500" y="2" width="7" height="7" fill="#fff" stroke="#111" stroke-width="1.100"/>
<path d="M9 4.200h4M9 6.200h4" stroke="#2244ee" stroke-width="1.100"/>
<path d="M5.500 12.500 l1.500-3.500 h8 l1.500 3.500z" fill="#f6f060" stroke="#111" stroke-width="1"/>
<path d="M8 11h1M10.200 11h1M12.400 11h1" stroke="#ee2020" stroke-width="1.100"/>
<rect x="5.500" y="12.500" width="11" height="3.300" fill="#f4f4c8" stroke="#111" stroke-width="1.100"/>
<path d="M7 14.200h8" stroke="#111" stroke-width=".9"/>
</svg>
<svg class="a" style="left:181px;top:430px" width="17" height="17" viewBox="0 0 17 17">
<rect x="1.500" y="4.500" width="9" height="3" fill="#3f9a4a" stroke="#1f6a2a" stroke-width=".8"/>
<rect x="1" y="8" width="10" height="3" fill="#3f78c8" stroke="#1f4890" stroke-width=".8"/>
<rect x="1.500" y="11.500" width="9.500" height="3" fill="#c87838" stroke="#80481a" stroke-width=".8"/>
<path d="M10.500 7.500 h3.500 l1.500 1.500 v6.500 h-5z" fill="#fbf6d8" stroke="#b0a060" stroke-width=".8"/>
<path d="M11.500 10.500h3M11.500 12.500h3" stroke="#a8b8d8" stroke-width=".8"/>
<path d="M11.300 6.800 q-.8-2.500 .8-4.300 q1.800 1.800 1 4.300z" fill="#ffc030" stroke="#c07810" stroke-width=".6"/>
</svg>
<svg class="a" style="left:246px;top:429px" width="18" height="18" viewBox="0 0 18 18">
<rect x="1.500" y="2.500" width="8" height="10" fill="#f0f0f0" stroke="#777" stroke-width="1"/>
<rect x="3.500" y="4" width="8" height="10" fill="#f6f6f6" stroke="#666" stroke-width="1"/>
<rect x="5.500" y="6.500" width="9" height="10" fill="#fff" stroke="#555" stroke-width="1"/>
<path d="M9 11h4M9 13h4M9 15h4" stroke="#508080" stroke-width="1"/>
<rect x="6.500" y="9" width="2" height="2" fill="#222"/>
<path d="M8.500 9.800 l6.200-8 l2 1.500 l-6.200 8 l-2.600 1.100z" fill="#f2a850" stroke="#6a3a18" stroke-width=".8"/>
</svg>
<svg class="a" style="left:302px;top:430px" width="15" height="15" viewBox="0 0 15 15">
<path d="M5.500 1.800 h4 v1.200 h-.8 v2.200 q4.300 1.800 4.300 5 q0 2.800 -2.500 2.800 h-6 q-2.500 0 -2.500-2.800 q0-3.200 4.300-5 v-2.200 h-.8z" fill="#48f098" stroke="#0a2a18" stroke-width="1.100"/>
<path d="M5 1.800h5" stroke="#111" stroke-width="1.600"/>
<path d="M3.500 12.800h8" stroke="#111" stroke-width="1.200"/>
<path d="M4 8.500 q1-2 3-2.500" stroke="#c8ffe0" stroke-width="1" fill="none"/>
</svg>
<svg class="a" style="left:370px;top:429px" width="15" height="16" viewBox="0 0 15 16">
<path d="M3 4 l3 5 M7.500 3.500 v5.500 M12 4 l-3 5" stroke="#111" stroke-width="1"/>
<circle cx="2.800" cy="3.500" r="1.900" fill="#f020e0" stroke="#111" stroke-width=".8"/>
<circle cx="7.500" cy="2.500" r="1.900" fill="#f020e0" stroke="#111" stroke-width=".8"/>
<circle cx="12.200" cy="3.500" r="1.900" fill="#f020e0" stroke="#111" stroke-width=".8"/>
<rect x="3.500" y="8.500" width="8" height="6.500" fill="#fff" stroke="#111" stroke-width="1.100"/>
<rect x="5" y="10.500" width="5" height="2.200" fill="#f0e020"/>
<path d="M11.500 15.500h2" stroke="#777" stroke-width="1"/>
</svg>
<svg class="a" style="left:450px;top:430px" width="16" height="13" viewBox="0 0 16 13">
<path d="M1.500 3.500 h2 l.8-1.600 h3 l.8 1.600 h2.400 v2 l3.500-1.800 v6.600 l-3.500-1.800 v2.500 h-9z" fill="#f4f4f4" stroke="#111" stroke-width="1.100"/>
<path d="M1.500 1.500h3v1.500" fill="none" stroke="#111" stroke-width="1"/>
<path d="M3 8.500h2" stroke="#e02020" stroke-width="1.200"/>
</svg>
<svg class="a" style="left:508px;top:430px" width="14" height="14" viewBox="0 0 14 14">
<path d="M1.500 1.500 h5 l6.500 7 l-4 4.500 l-7.500-7.500z" fill="#86d0f6" stroke="#e4f2fa" stroke-width="1"/>
<circle cx="3.800" cy="3.800" r="1" fill="#fff"/>
</svg>
<div class="t " style="left:13px;top:456px;">Šifra:</div>
<div class="in " style="left:43px;top:454px;width:79px;height:16px;line-height:14px;padding-left:0.5px">T2590</div>
<div class="t " style="left:131px;top:456px;">Naziv:</div>
<div class="in " style="left:165px;top:454px;width:196px;height:16px;line-height:14px;letter-spacing:-0.225px;">75-UT-III-32 UTIKAČ ZA UGRADNJU 3</div>
<div class="t " style="left:366px;top:456px;">U kasi:</div>
<div class="in " style="left:402px;top:454px;width:85px;height:16px;line-height:14px;letter-spacing:-0.225px;">75-UT-III-32 UTIKAČ ZA UGRADNJU 3</div>
<div class="t " style="left:495px;top:456px;">J.mere:</div>
<div class="in " style="left:535px;top:454px;width:52px;height:16px;line-height:14px;padding-left:0.5px;letter-spacing:-0.927px;">kom</div>
<div class="t " style="left:15px;top:477px;">Barkod:</div>
<div class="in " style="left:55px;top:475px;width:88px;height:16px;line-height:14px;padding-left:0;letter-spacing:-0.380px;">9TL0PU031275</div>
<div class="a" style="left:145px;top:473px;width:20px;height:20px;background:#fff;border-right:2px solid #696969;border-bottom:2px solid #696969"></div>
<div class="a" style="left:147px;top:475px;width:16px;height:16px;background:#4a98f0;border-radius:3px;color:#fff"><div class="t b" style="left:2px;top:-1px;height:16px;line-height:16px;font-size:15px;letter-spacing:-1.5px">f<span style="font-size:11px;position:relative;top:1.5px">x</span></div></div>
<div class="t " style="left:171px;top:477px;">Grupa:</div>
<div class="in " style="left:208px;top:475px;width:153px;height:16px;line-height:14px;letter-spacing:-0.280px;">Gotovi proizvodi ,OSNOVNA</div>
<div class="t " style="left:368px;top:477px;">Spc.tež.:</div>
<div class="in " style="left:416px;top:475px;width:71px;height:16px;line-height:14px;"></div>
<div class="in " style="left:490px;top:475px;width:43px;height:16px;line-height:14px;"></div>
<div class="t b" style="left:536px;top:475px;font-size:16px;height:17px;line-height:17px;font-style:italic">/</div>
<div class="in " style="left:543px;top:475px;width:44px;height:16px;line-height:14px;"></div>
<div class="t " style="left:16px;top:497px;letter-spacing:-0.051px;">Osnovni artikal:</div>
<div class="in dis" style="left:95px;top:495px;width:193px;height:16px;line-height:14px;"></div>
<div class="a" style="left:291px;top:493px;width:20px;height:20px;background:#fff;border-right:2px solid #696969;border-bottom:2px solid #696969"></div>
<div class="a" style="left:294px;top:496px;width:14px;height:14px;background:#7cbc20;border-radius:3px"><div class="a" style="left:3px;top:6px;width:8px;height:2px;background:#fff"></div><div class="a" style="left:6px;top:2.500px;width:2px;height:9px;background:#fff"></div></div>
<div class="a" style="left:312px;top:493px;width:20px;height:20px;background:#fff;border-right:2px solid #696969;border-bottom:2px solid #696969"></div>
<div class="a" style="left:315px;top:496px;width:14px;height:14px;background:#ff5a14;border-radius:3px"><div class="a" style="left:3px;top:6px;width:8px;height:2px;background:#fff"></div></div>
<div class="t " style="left:333px;top:498px;letter-spacing:-0.169px;">EJM osn. pak:</div>
<div class="t b" style="left:403.5px;top:498px;">1</div>
<div class="in " style="left:412px;top:496px;width:51px;height:16px;line-height:14px;"></div>
<div class="t " style="left:466px;top:498px;font-size:12px">=</div>
<div class="in " style="left:476px;top:496px;width:56px;height:16px;line-height:14px;"></div>
<div class="in " style="left:535px;top:496px;width:52px;height:16px;line-height:14px;"></div>
<div class="t " style="left:18px;top:518px;letter-spacing:-0.242px;">MASA Neto:</div>
<div class="in " style="left:79px;top:516px;width:52px;height:16px;line-height:14px;"></div>
<div class="in " style="left:134px;top:516px;width:52px;height:16px;line-height:14px;padding-left:0">kg</div>
<div class="t " style="left:191px;top:518px;">Bruto:</div>
<div class="in " style="left:224px;top:516px;width:52px;height:16px;line-height:14px;"></div>
<div class="in dis" style="left:279px;top:516px;width:36px;height:16px;line-height:14px;padding-left:0">kg</div>
<div class="t " style="left:328px;top:519px;letter-spacing:0.142px;">Transport.pak:</div>
<div class="t b" style="left:403.5px;top:519px;">1</div>
<div class="in " style="left:412px;top:517px;width:51px;height:16px;line-height:14px;"></div>
<div class="t " style="left:466px;top:519px;font-size:12px">=</div>
<div class="in " style="left:476px;top:517px;width:56px;height:16px;line-height:14px;"></div>
<div class="in dis" style="left:535px;top:517px;width:52px;height:16px;line-height:14px;"></div>
<div class="t " style="left:19px;top:537px;letter-spacing:-0.114px;">Sistem proizvoda:</div>
<div class="in " style="left:108px;top:535px;width:169px;height:16px;line-height:14px;"></div>
<div class="dd " style="left:257px;top:536px;height:14px;width:18px"></div>
<div class="t r " style="right:661px;top:537px;letter-spacing:-0.066px;">Na kasi se prodaje u pakovanju:</div>
<div class="cb" style="left:574px;top:537px"><i></i></div>
<div class="a" style="left:14px;top:554px;width:573px;height:41px;border-top:2px solid #6e6e6e;border-left:2px solid #6e6e6e;border-right:1px solid #fff;border-bottom:1px solid #fff"></div>
<div class="t b" style="left:46.5px;top:558px;letter-spacing:0.116px;">TRANSPORTNI GABARITI</div>
<div class="t " style="left:224px;top:558px;">Masa:</div>
<div class="in " style="left:257px;top:557px;width:60px;height:15px;line-height:14px;"></div>
<div class="in dis" style="left:322px;top:557px;width:60px;height:15px;line-height:14px;padding-left:0">kg</div>
<div class="t " style="left:403px;top:558px;letter-spacing:-0.164px;">Zapremina:</div>
<div class="in " style="left:460px;top:557px;width:61px;height:15px;line-height:14px;"></div>
<div class="in " style="left:523px;top:557px;width:60px;height:15px;line-height:14px;padding-left:0">m3</div>
<div class="t " style="left:32px;top:577px;">Dužina:</div>
<div class="in " style="left:71px;top:575px;width:61px;height:16px;line-height:14px;"></div>
<div class="in " style="left:134px;top:575px;width:61px;height:16px;line-height:14px;padding-left:0">m</div>
<div class="t " style="left:223px;top:577px;">Širina:</div>
<div class="in " style="left:257px;top:575px;width:60px;height:16px;line-height:14px;"></div>
<div class="in dis" style="left:322px;top:575px;width:60px;height:16px;line-height:14px;padding-left:0">m</div>
<div class="t " style="left:426px;top:577px;">Visina:</div>
<div class="in " style="left:460px;top:575px;width:61px;height:16px;line-height:14px;"></div>
<div class="in dis" style="left:523px;top:575px;width:60px;height:16px;line-height:14px;padding-left:0">m</div>
</body></html>
